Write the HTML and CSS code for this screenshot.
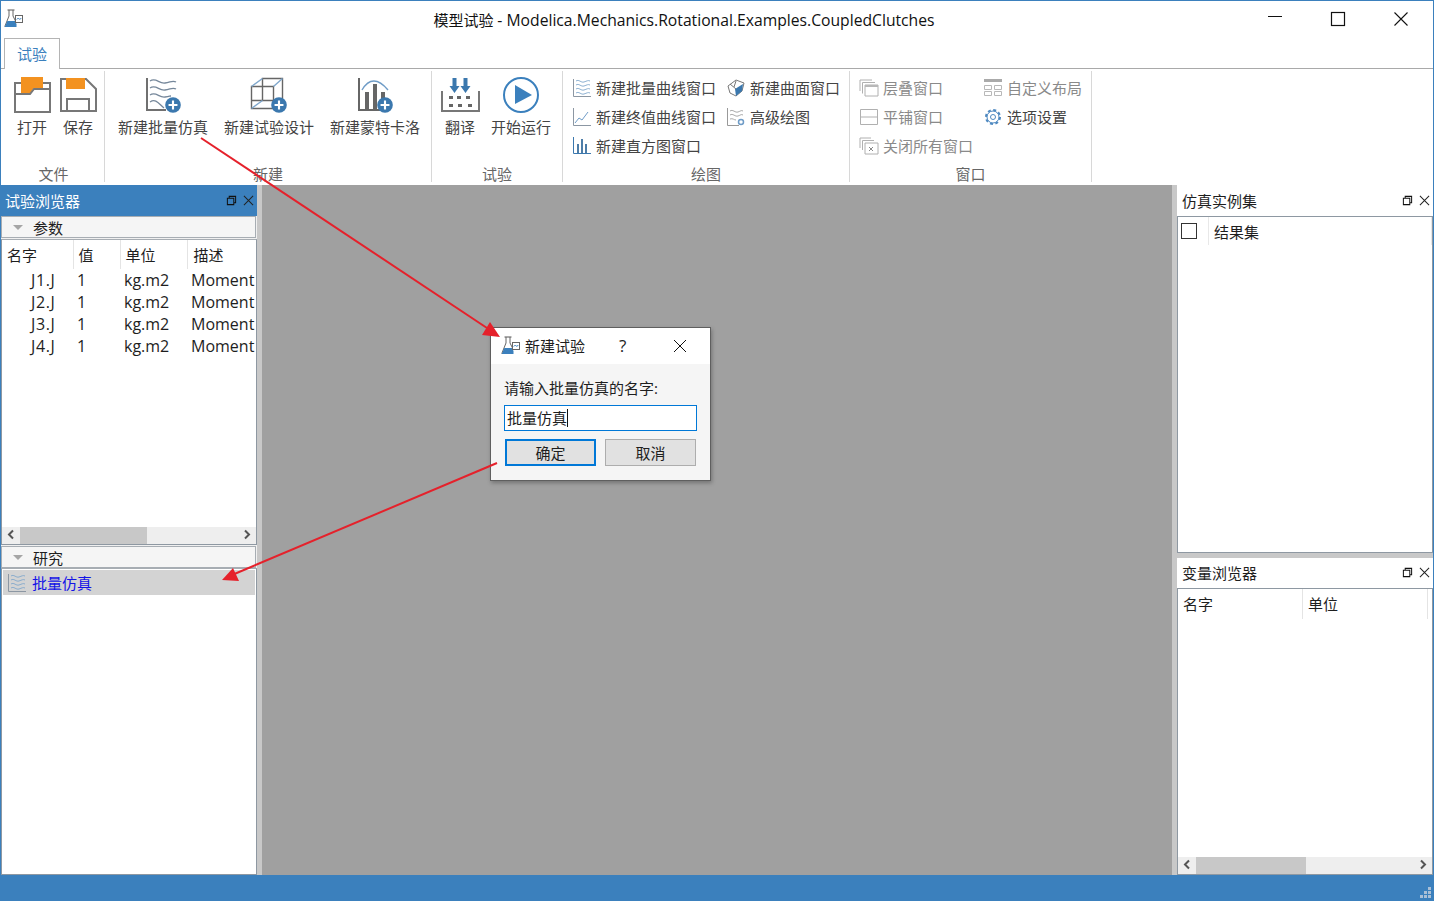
FILE: index.html
```html
<!DOCTYPE html>
<html lang="zh-CN">
<head>
<meta charset="utf-8">
<title>模型试验</title>
<link rel="stylesheet" href="styles.css">
</head>
<body>
<svg class="defs" width="0" height="0" aria-hidden="true">
  <defs>
    <symbol id="flask" viewBox="0 0 20 19">
      <path d="M3.500 1h7" fill="none" stroke="#555" stroke-width="1"/>
      <path d="M5 1v6L.8 17.500h11M9 1v6l2.500 5" fill="none" stroke="#666" stroke-width="1"/>
      <path d="M3.300 12h7.700l1.500 3v3H.8z" fill="#3b80bd"/>
      <rect x="11.500" y="6.500" width="7" height="7" fill="#fff" stroke="#666"/>
      <path d="M12.800 10.500l1.500-1.500 1.500 1.500 1.500-1.500" fill="none" stroke="#3b80bd"/>
    </symbol>
    <symbol id="waves" viewBox="0 0 18 18">
      <path d="M.5 0v17.500H18" fill="none" stroke="#8c97a3"/>
      <path d="M3 2c3-2 5 2 8 1s4-2 6-1M3 6c3-2 5 2 8 1s4-2 6-1M3 10c3-2 5 2 8 1s4-2 6-1M3 14c3-2 5 2 8 1s4-2 6-1" fill="none" stroke="#7fa7cc" stroke-width=".9"/>
    </symbol>
    <symbol id="plus" viewBox="0 0 18 18">
      <circle cx="9" cy="9" r="8.800" fill="#3b78ae"/>
      <path d="M9 4v10M4 9h10" stroke="#fff" stroke-width="2.400"/>
    </symbol>
    <symbol id="stack" viewBox="0 0 20 18">
      <path d="M1 12V1h12M3.500 14.500v-11H16M6 17V6h13v11z" fill="#fff" stroke="#b0b0b0"/>
      <path d="M6 6h13v2H6z" fill="#b8b8b8"/>
    </symbol>
    <symbol id="restore" viewBox="0 0 12 12">
      <path d="M1.500 3.500h7v7h-7zM3.500 3.500v-2h7v7h-2" fill="none" stroke="#111" stroke-width="1.100"/>
    </symbol>
    <symbol id="xmark" viewBox="0 0 12 12">
      <path d="M1 1l10 10M11 1L1 11" stroke="#222" stroke-width="1.100"/>
    </symbol>
    <symbol id="chev-l" viewBox="0 0 18 17">
      <path d="M11 3.500L7 7.500l4 4" fill="none" stroke="#555" stroke-width="2"/>
    </symbol>
    <symbol id="chev-r" viewBox="0 0 18 17">
      <path d="M7 3.500l4 4-4 4" fill="none" stroke="#555" stroke-width="2"/>
    </symbol>
  </defs>
</svg>

<div class="window">
  <header class="titlebar">
    <svg class="app-icon"><use href="#flask"/></svg>
    <div class="title">模型试验 <span class="lat">- Modelica.Mechanics.Rotational.Examples.CoupledClutches</span></div>
    <div class="winbtns">
      <button class="winbtn" aria-label="最小化"><svg width="16" height="16" viewBox="0 0 16 16"><path d="M1 5.500h14" stroke="#111"/></svg></button>
      <button class="winbtn" aria-label="最大化"><svg width="16" height="16" viewBox="0 0 16 16"><rect x="1.500" y="1.500" width="13" height="13" fill="none" stroke="#111" stroke-width="1.200"/></svg></button>
      <button class="winbtn" aria-label="关闭"><svg width="16" height="16" viewBox="0 0 16 16"><path d="M1.500 1.500l13 13M14.500 1.500l-13 13" stroke="#111" stroke-width="1.100"/></svg></button>
    </div>
  </header>

  <nav class="tabrow"><div class="tab">试验</div></nav>

  <section class="ribbon">
    <div class="group group-file">
      <div class="group-body">
        <div class="bigbtn">
          <svg class="bigicon" viewBox="0 0 38 38"><path d="M8 1h22v11h-9l-4 5H8z" fill="#f39220"/><path d="M30 7h7v29H2V7h6M2 18h15l4-5h16" fill="none" stroke="#777" stroke-width="2"/></svg>
          <span>打开</span>
        </div>
        <div class="bigbtn">
          <svg class="bigicon" viewBox="0 0 38 38"><path d="M2 3h25l10 10v22H2z" fill="#fff" stroke="#777" stroke-width="2"/><path d="M7 2h19v11H7z" fill="#f39220"/><path d="M8 35V23h22v12" fill="none" stroke="#777" stroke-width="2"/></svg>
          <span>保存</span>
        </div>
      </div>
      <div class="group-label">文件</div>
    </div>

    <div class="group group-new">
      <div class="group-body">
        <div class="bigbtn">
          <span class="iconwrap">
            <svg class="bigicon" viewBox="0 0 38 38"><path d="M3 2v32h19" fill="none" stroke="#707070" stroke-width="2"/><path d="M6 5c6-4 9 3 15 2s8-3 11-1M6 12c6-4 9 3 15 2s8-3 11-1M6 19c6-4 9 3 15 2s4-1 6-1M6 26c6-4 9 2 14 6" fill="none" stroke="#75879a" stroke-width="1.300"/></svg>
            <svg class="plus"><use href="#plus"/></svg>
          </span>
          <span>新建批量仿真</span>
        </div>
        <div class="bigbtn">
          <span class="iconwrap">
            <svg class="bigicon" viewBox="0 0 38 38"><path d="M1.500 10.500h22v22h-22zM12.500 2.500h20v22h-20zM1.500 24.500h31" fill="none" stroke="#666" stroke-width="1.400"/><path d="M1.500 10.500l11-8M23.500 10.500l9-8M1.500 32.500l11-8M23.500 32.500l9-8" fill="none" stroke="#7fa7cc" stroke-width="1.400"/></svg>
            <svg class="plus"><use href="#plus"/></svg>
          </span>
          <span>新建试验设计</span>
        </div>
        <div class="bigbtn">
          <span class="iconwrap">
            <svg class="bigicon" viewBox="0 0 38 38"><path d="M3 2v32h21" fill="none" stroke="#666" stroke-width="2"/><path d="M9 16h4v17H9zM17 8h4v25h-4zM25 16h4v8h-4z" fill="#666"/><path d="M6 14C13 2 22 2 32 14" fill="none" stroke="#6f9cc7" stroke-width="1.400"/></svg>
            <svg class="plus"><use href="#plus"/></svg>
          </span>
          <span>新建蒙特卡洛</span>
        </div>
      </div>
      <div class="group-label">新建</div>
    </div>

    <div class="group group-run">
      <div class="group-body">
        <div class="bigbtn">
          <svg class="bigicon" viewBox="0 0 38 38"><path d="M1 15v20h37V15" fill="none" stroke="#777" stroke-width="2"/><path d="M11.500 2h4v8h3l-5 7-5-7h3zM22.500 2h4v8h3l-5 7-5-7h3z" fill="#3b78ae"/><path d="M8 20h4v3H8zM16 20h4v3h-4zM25 20h4v3h-4zM8 28h4v3H8zM17 28h4v3h-4zM27 28h4v3h-4z" fill="#666"/></svg>
          <span>翻译</span>
        </div>
        <div class="bigbtn">
          <svg class="bigicon" viewBox="0 0 38 38"><circle cx="19" cy="19" r="17" fill="none" stroke="#3b80bd" stroke-width="2"/><path d="M13 9l17 10-17 9z" fill="#3b80bd"/></svg>
          <span>开始运行</span>
        </div>
      </div>
      <div class="group-label">试验</div>
    </div>

    <div class="group group-plot">
      <div class="small-grid plot-grid">
        <div class="smallbtn"><svg class="smallicon"><use href="#waves"/></svg><span>新建批量曲线窗口</span></div>
        <div class="smallbtn"><svg class="smallicon" viewBox="0 0 18 18"><path d="M1 7l8-6 8 3-2 8-6 5-6-3z" fill="#fff" stroke="#777"/><path d="M8 10l8-5-1 7-6 5z" fill="#3b78ae"/><path d="M3 5l6 5M9 2l-2 6" stroke="#777"/></svg><span>新建曲面窗口</span></div>
        <div class="smallbtn"><svg class="smallicon" viewBox="0 0 18 18"><path d="M.5 0v17.500H18" fill="none" stroke="#8c97a3"/><path d="M2 15l4-5 3 2 6-8" fill="none" stroke="#6f9cc7"/></svg><span>新建终值曲线窗口</span></div>
        <div class="smallbtn"><svg class="smallicon" viewBox="0 0 18 18"><path d="M.5 0v17.500H12" fill="none" stroke="#999"/><path d="M3 3c3-2 5 2 8 1s3-2 5-1M3 7c3-2 5 2 8 1s3-2 5-1M3 11c3-1 4 1 6 1" fill="none" stroke="#a8a8a8"/><circle cx="14" cy="14" r="2.500" fill="none" stroke="#6f9cc7" stroke-width="1.500"/></svg><span>高级绘图</span></div>
        <div class="smallbtn"><svg class="smallicon" viewBox="0 0 18 18"><path d="M.5 0v16.500H18" fill="none" stroke="#3b78ae"/><path d="M4 7h2v9H4zM8 2h2v14H8zM12 7h2v9h-2z" fill="#4d7da8"/></svg><span>新建直方图窗口</span></div>
      </div>
      <div class="group-label">绘图</div>
    </div>

    <div class="group group-win">
      <div class="small-grid win-grid">
        <div class="smallbtn off"><svg class="smallicon wide"><use href="#stack"/></svg><span>层叠窗口</span></div>
        <div class="smallbtn off"><svg class="smallicon wide" viewBox="0 0 20 18"><path d="M1 0h18v3H1z" fill="#aaa"/><path d="M1.500 6.500h7v4h-7zM11.500 6.500h7v4h-7zM1.500 12.500h7v4h-7zM11.500 12.500h7v4h-7z" fill="none" stroke="#b8b8b8"/></svg><span>自定义布局</span></div>
        <div class="smallbtn off"><svg class="smallicon wide" viewBox="0 0 20 18"><path d="M1.500 1.500h17v15h-17zM1.500 9h17" fill="none" stroke="#b0b0b0"/></svg><span>平铺窗口</span></div>
        <div class="smallbtn"><svg class="smallicon wide" viewBox="0 0 20 18"><circle cx="10" cy="9" r="2.500" fill="none" stroke="#4d88c0"/><circle cx="10" cy="9" r="6" fill="none" stroke="#4d88c0"/><circle cx="10" cy="9" r="7" fill="none" stroke="#4d88c0" stroke-width="2" stroke-dasharray="3 2.500"/></svg><span>选项设置</span></div>
        <div class="smallbtn off span2"><svg class="smallicon wide" viewBox="0 0 20 18"><path d="M1 11V1h11M3.500 13V3.500H15M6 17V6h13v11z" fill="#fff" stroke="#b0b0b0"/><path d="M10 10l4 4M14 10l-4 4" stroke="#888"/></svg><span>关闭所有窗口</span></div>
      </div>
      <div class="group-label">窗口</div>
    </div>
    <div class="ribbon-rest"></div>
  </section>

  <main class="workspace">
    <aside class="dock-left">
      <div class="dock-title blue">
        <span class="dock-name">试验浏览器</span>
        <svg class="dock-ico"><use href="#restore"/></svg>
        <svg class="dock-ico"><use href="#xmark"/></svg>
      </div>
      <div class="section-head"><span class="tri"></span>参数</div>
      <div class="panel params">
        <table class="grid">
          <thead>
            <tr><th class="c1">名字</th><th class="c2">值</th><th class="c3">单位</th><th class="c4">描述</th></tr>
          </thead>
          <tbody>
            <tr><td class="name">J1.J</td><td>1</td><td>kg.m2</td><td>Moment</td></tr>
            <tr><td class="name">J2.J</td><td>1</td><td>kg.m2</td><td>Moment</td></tr>
            <tr><td class="name">J3.J</td><td>1</td><td>kg.m2</td><td>Moment</td></tr>
            <tr><td class="name">J4.J</td><td>1</td><td>kg.m2</td><td>Moment</td></tr>
          </tbody>
        </table>
        <div class="hscroll left-scroll">
          <svg class="arrow"><use href="#chev-l"/></svg><span class="thumb"></span><svg class="arrow"><use href="#chev-r"/></svg>
        </div>
      </div>
      <div class="section-head gap-top"><span class="tri"></span>研究</div>
      <div class="panel study">
        <div class="study-row"><svg class="smallicon"><use href="#waves"/></svg><span>批量仿真</span></div>
      </div>
    </aside>

    <div class="canvas"></div>

    <aside class="dock-right">
      <div class="dock-title">
        <span class="dock-name">仿真实例集</span>
        <svg class="dock-ico"><use href="#restore"/></svg>
        <svg class="dock-ico"><use href="#xmark"/></svg>
      </div>
      <div class="panel results">
        <div class="result-head"><span class="check-cell"><span class="check"></span></span><span class="result-name">结果集</span></div>
      </div>
      <div class="split"></div>
      <div class="dock-title short">
        <span class="dock-name">变量浏览器</span>
        <svg class="dock-ico"><use href="#restore"/></svg>
        <svg class="dock-ico"><use href="#xmark"/></svg>
      </div>
      <div class="panel vars">
        <div class="var-head"><span class="var-name">名字</span><span class="var-unit">单位</span></div>
        <div class="hscroll right-scroll">
          <svg class="arrow"><use href="#chev-l"/></svg><span class="thumb"></span><svg class="arrow"><use href="#chev-r"/></svg>
        </div>
      </div>
    </aside>
  </main>

  <footer class="statusbar">
    <svg class="grip" width="11" height="11" viewBox="0 0 11 11"><path d="M8 0h3v3H8zM4 4h3v3H4zM8 4h3v3H8zM0 8h3v3H0zM4 8h3v3H4zM8 8h3v3H8z" fill="#a9bfd6"/></svg>
  </footer>

  <div class="dialog">
    <div class="dialog-title">
      <svg class="dialog-icon"><use href="#flask"/></svg>
      <span class="dialog-name">新建试验</span>
      <span class="dialog-help">?</span>
      <svg class="dialog-close" width="14" height="14" viewBox="0 0 14 14"><path d="M1 1l12 12M13 1L1 13" stroke="#111"/></svg>
    </div>
    <div class="dialog-body">
      <div class="dialog-label">请输入批量仿真的名字:</div>
      <div class="dialog-input"><span>批量仿真</span><span class="caret"></span></div>
      <div class="dialog-btns">
        <div class="dbtn primary">确定</div>
        <div class="dbtn">取消</div>
      </div>
    </div>
  </div>

  <svg class="arrows" width="1434" height="901" viewBox="0 0 1434 901" aria-hidden="true">
    <path d="M201 138L490 330" stroke="#e5212b" stroke-width="2" fill="none"/>
    <path d="M500 337l-18-2 8-13z" fill="#e5212b"/>
    <path d="M497 463L232 575" stroke="#e5212b" stroke-width="2" fill="none"/>
    <path d="M222 580l11-12 6 13z" fill="#e5212b"/>
  </svg>
</div>
</body>
</html>
```

FILE: styles.css
```css
* { box-sizing: border-box; }
html, body { margin: 0; padding: 0; }
body {
  width: 1434px;
  height: 901px;
  overflow: hidden;
  font-family: "Open Sans", "Noto Sans CJK SC", sans-serif;
  font-size: 15px;
  color: #1e1e1e;
  background: #fff;
}
.defs { position: absolute; }
.window {
  position: relative;
  width: 1434px;
  height: 901px;
  display: flex;
  flex-direction: column;
  border: 1px solid #3b80bd;
  border-bottom: 0;
  background: #fff;
}

/* title */
.titlebar { height: 37px; display: flex; align-items: center; flex: none; }
.app-icon { width: 20px; height: 19px; margin-left: 3px; margin-top: -2px; flex: none; }
.title { flex: 1; text-align: center; padding-left: 101px; padding-top: 1px; color: #111; line-height: 37px; white-space: nowrap; }
.lat { font-size: 15.7px; }
.winbtns { display: flex; flex: none; height: 37px; margin-right: 1px; }
.winbtn { width: 63px; height: 37px; border: 0; padding: 10px 0 0; background: none; display: flex; justify-content: center; align-items: flex-start; }

/* tabs */
.tabrow { height: 31px; flex: none; padding-left: 3px; border-bottom: 1px solid #a9a9a9; display: flex; align-items: flex-end; }
.tab { width: 56px; height: 31px; margin-bottom: -1px; border: 1px solid #b4b4b4; border-bottom: 0; background: #fff; color: #3b80bd; text-align: center; line-height: 30px; }

/* ribbon */
.ribbon { height: 116px; flex: none; display: flex; padding-top: 2px; color: #444; }
.group { display: flex; flex-direction: column; border-right: 1px solid #d8d8d8; height: 111px; flex: none; }
.group-body { display: flex; flex: 1; }
.group-label { height: 20px; line-height: 20px; text-align: center; color: #666; margin-bottom: -2px; }
.group-file { width: 104px; padding-left: 8px; }
.group-new { width: 327px; padding-left: 5px; }
.group-run { width: 131px; padding-left: 5px; }
.group-plot { width: 287px; padding-left: 10px; }
.group-win { width: 242px; padding-left: 9px; }
.ribbon-rest { flex: 1; }
.group-file .group-label { margin-left: -6px; }
.group-new .group-label { margin-left: -5px; }
.group-run .group-label { margin-left: -5px; }
.group-plot .group-label { margin-left: -10px; }
.group-win .group-label { margin-left: -9px; }

.bigbtn { display: flex; flex-direction: column; align-items: center; padding: 5px 8px 0; white-space: nowrap; line-height: 22px; }
.bigicon { width: 38px; height: 38px; display: block; margin: 0 -4px 2px; overflow: visible; flex: none; }
.iconwrap { position: relative; display: block; width: 38px; height: 40px; }
.iconwrap .bigicon { margin: 0; }
.plus { position: absolute; width: 16px; height: 16px; left: 21px; top: 21px; }

.small-grid { flex: 1; display: grid; grid-auto-rows: 29px; padding-top: 2px; }
.plot-grid { grid-template-columns: 154px 1fr; }
.win-grid { grid-template-columns: 124px 1fr; }
.smallbtn { display: flex; align-items: center; white-space: nowrap; gap: 5px; }
.smallicon { width: 18px; height: 18px; flex: none; }
.smallicon.wide { width: 20px; }
.win-grid .smallbtn { gap: 4px; }
.off { color: #8a8a8a; }
.span2 { grid-column: span 2; }

/* workspace */
.workspace { flex: 1; min-height: 0; display: flex; background: #c8c8c8; }
.dock-left { width: 256px; flex: none; display: flex; flex-direction: column; background: #f0f0f0; }
.canvas { flex: 1; margin: 0 5px; background: #a0a0a0; }
.dock-right { width: 256px; flex: none; display: flex; flex-direction: column; }

.dock-title { height: 31px; flex: none; display: flex; align-items: center; gap: 6px; padding: 0 3px 0 5px; background: #fff; color: #1e1e1e; }
.dock-title.blue { background: #3b80bd; color: #fff; padding-left: 4px; }
.dock-title.short { height: 30px; padding-bottom: 2px; }
.dock-name { flex: 1; }
.dock-ico { width: 11px; height: 11px; flex: none; }

.section-head { height: 22px; flex: none; margin-right: 1px; display: flex; align-items: center; padding: 1px 0 0 11px; background: #f5f5f5; border: 1px solid #a7adb3; color: #1e1e1e; line-height: 20px; }
.gap-top { margin-top: 1px; }
.tri { width: 0; height: 0; border-left: 5px solid transparent; border-right: 5px solid transparent; border-top: 5px solid #a5a5a5; margin: -1px 10px 0 0; }

.panel { background: #fff; border: 1px solid #8e98a2; position: relative; }
.params { height: 306px; margin-top: 1px; flex: none; border-top: 1px solid #a7adb3; }
.study { flex: 1; padding: 1px 0 0 1px; border-top: 1px solid #a7adb3; }

.grid { width: 100%; border-collapse: collapse; table-layout: fixed; }
.grid th { font-weight: 400; text-align: left; height: 29px; padding: 0 0 0 5px; border-left: 1px solid #e4e4e4; white-space: nowrap; overflow: hidden; }
.grid th:first-child { border-left: 0; }
.grid th.c4 { padding-left: 6px; }
.grid td { height: 22px; padding: 1px 0 0 4px; white-space: nowrap; overflow: hidden; line-height: 21px; font-size: 16px; }
.grid .name { padding-left: 29px; letter-spacing: .6px; }
.grid .c1 { width: 71px; }
.grid .c2 { width: 47px; }
.grid .c3 { width: 67px; }

.hscroll { position: absolute; left: 0; right: 0; bottom: 0; height: 17px; background: #eee; display: flex; justify-content: space-between; align-items: center; }
.arrow { width: 18px; height: 17px; flex: none; }
.thumb { height: 17px; background: #c8c8c8; }
.left-scroll .thumb { width: 127px; margin-right: auto; }
.right-scroll .thumb { width: 110px; margin-right: auto; }

.study-row { height: 25px; margin-right: 1px; display: flex; align-items: center; gap: 6px; padding-left: 5px; background: #d3d3d3; color: #1414e6; }

.results { height: 337px; flex: none; }
.result-head { height: 28px; display: flex; align-items: center; border-right: 1px solid #e8e8e8; }
.check-cell { width: 31px; height: 28px; border-right: 1px solid #e8e8e8; display: flex; align-items: center; padding-left: 3px; flex: none; }
.check { width: 16px; height: 16px; border: 1px solid #333; background: #fff; display: block; }
.result-name { padding-left: 5px; }
.split { height: 5px; flex: none; background: #c8c8c8; }
.vars { flex: 1; }
.var-head { height: 30px; display: flex; align-items: center; }
.var-name { width: 125px; padding-left: 5px; height: 30px; line-height: 31px; border-right: 1px solid #e4e4e4; flex: none; }
.var-unit { width: 125px; padding-left: 5px; height: 30px; line-height: 31px; border-right: 1px solid #e4e4e4; flex: none; }

.statusbar { height: 26px; flex: none; background: #3b80bd; display: flex; justify-content: flex-end; align-items: flex-end; padding: 0 2px 3px 0; }
.grip { display: block; }

/* overlays */
.arrows { position: absolute; left: -1px; top: -1px; pointer-events: none; z-index: 3; }
.dialog { position: absolute; left: 489px; top: 326px; width: 221px; height: 154px; z-index: 2; border: 1px solid #5f5f5f; background: #f5f5f5; box-shadow: 1px 2px 4px rgba(0,0,0,.28); display: flex; flex-direction: column; }
.dialog-title { height: 36px; flex: none; background: #fff; display: flex; align-items: center; padding-left: 10px; }
.dialog-icon { width: 20px; height: 19px; flex: none; margin-bottom: 2px; }
.dialog-name { margin: 0 0 2px 4px; width: 94px; }
.dialog-help { width: 56px; flex: none; font-size: 17px; margin-bottom: 2px; }
.dialog-close { flex: none; margin-left: -2px; }
.dialog-body { flex: 1; padding: 13px 13px 0 13px; }
.dialog-label { line-height: 22px; height: 22px; white-space: nowrap; }
.dialog-input { margin-top: 6px; height: 26px; width: 193px; background: #fff; border: 1px solid #0078d7; display: flex; align-items: center; padding-left: 2px; line-height: 22px; }
.caret { width: 1px; height: 18px; background: #111; }
.dialog-btns { display: flex; gap: 9px; margin-top: 8px; padding-left: 1px; }
.dbtn { width: 91px; height: 27px; background: #e1e1e1; border: 1px solid #adadad; text-align: center; line-height: 26px; }
.dbtn.primary { border: 2px solid #0078d7; line-height: 24px; }
```
